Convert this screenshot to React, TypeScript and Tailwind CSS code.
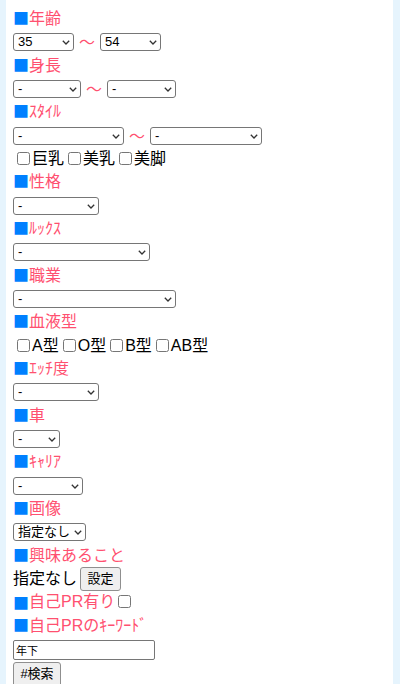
import React from "react";

const PINK = "text-[#ff5070]";

function H({ children }: { children: React.ReactNode }) {
  return (
    <div className={`h-[23.33px] leading-[20.5px] text-[16px] whitespace-nowrap ${PINK}`}>
      <span className="text-[#0080ff] font-['Noto_Sans_CJK_JP',sans-serif]">■</span>
      {children}
    </div>
  );
}

function Sel({ w, value = "-" }: { w: string; value?: string }) {
  return (
    <div className={`relative ${w} h-[18px] shrink-0`}>
      <select
        className="appearance-none block w-full h-[18px] border border-[#767676] rounded-[3px] bg-white text-[13px] leading-[16px] pl-[4px] text-black outline-none"
        defaultValue={value}
      >
        <option value={value}>{value}</option>
      </select>
      <svg
        className="absolute right-[4px] top-[7px] pointer-events-none"
        width="8"
        height="5"
        viewBox="0 0 8 5"
      >
        <path d="M0.8 0.8 L4 4 L7.2 0.8" stroke="#333" strokeWidth="1.3" fill="none" />
      </svg>
    </div>
  );
}

function SelRow({ children }: { children: React.ReactNode }) {
  return <div className="h-[23.33px] pt-[3px] flex items-start">{children}</div>;
}

function Tilde() {
  return (
    <span className={`w-[16px] mx-[5px] text-[16px] leading-[16px] font-['Noto_Sans_CJK_JP',sans-serif] ${PINK}`}>〜</span>
  );
}

function Chk({ label }: { label: string }) {
  return (
    <label className="flex items-center">
      <input type="checkbox" className="m-0 ml-[4px] mr-[2px] w-[13px] h-[13px]" />
      <span>{label}</span>
    </label>
  );
}

function ChkRow({ items }: { items: string[] }) {
  return (
    <div className="h-[23.33px] flex items-center text-[16px] text-black leading-[23.33px]">
      {items.map((i) => (
        <Chk key={i} label={i} />
      ))}
    </div>
  );
}

export default function App() {
  return (
    <div className="flex w-[400px] h-[684px] overflow-hidden bg-white font-['Liberation_Sans','Noto_Sans_CJK_JP',sans-serif]">
      <div className="w-[6px] shrink-0 bg-[#e6f4fd]" />
      <div className="flex-1 pl-[7px] pt-[7px] bg-white">
        <H>年齢</H>
        <SelRow>
          <Sel w="w-[61px]" value="35" />
          <Tilde />
          <Sel w="w-[61px]" value="54" />
        </SelRow>
        <H>身長</H>
        <SelRow>
          <Sel w="w-[68px]" />
          <Tilde />
          <Sel w="w-[69px]" />
        </SelRow>
        <H>ｽﾀｲﾙ</H>
        <SelRow>
          <Sel w="w-[111px]" />
          <Tilde />
          <Sel w="w-[112px]" />
        </SelRow>
        <ChkRow items={["巨乳", "美乳", "美脚"]} />
        <H>性格</H>
        <SelRow>
          <Sel w="w-[86px]" />
        </SelRow>
        <H>ﾙｯｸｽ</H>
        <SelRow>
          <Sel w="w-[137px]" />
        </SelRow>
        <H>職業</H>
        <SelRow>
          <Sel w="w-[163px]" />
        </SelRow>
        <H>血液型</H>
        <ChkRow items={["A型", "O型", "B型", "AB型"]} />
        <H>ｴｯﾁ度</H>
        <SelRow>
          <Sel w="w-[86px]" />
        </SelRow>
        <H>車</H>
        <SelRow>
          <Sel w="w-[47px]" />
        </SelRow>
        <H>ｷｬﾘｱ</H>
        <SelRow>
          <Sel w="w-[70px]" />
        </SelRow>
        <H>画像</H>
        <SelRow>
          <Sel w="w-[73px]" value="指定なし" />
        </SelRow>
        <H>興味あること</H>
        <div className="h-[23.33px] flex items-start text-[16px] text-black">
          <span className="w-[64px] shrink-0 whitespace-nowrap leading-[21px] pt-[1px] text-[16px]">指定なし</span>
          <button className="ml-[3px] w-[41px] h-[24px] text-[13px] leading-[16px] border border-[#8f8f8f] rounded-[3px] bg-[#efefef] text-black">
            設定
          </button>
        </div>
        <div className={`h-[23.33px] flex items-center leading-[20.5px] text-[16px] whitespace-nowrap ${PINK}`}>
          <span className="text-[#0080ff] font-['Noto_Sans_CJK_JP',sans-serif]">■</span>
          <span>自己PR有り</span>
          <input type="checkbox" className="m-0 ml-[3px] w-[13px] h-[13px]" />
        </div>
        <H>自己PRのｷｰﾜｰﾄﾞ</H>
        <div className="h-[23.33px] pt-[3px]">
          <input
            type="text"
            defaultValue="年下"
            className="block w-[142px] h-[20px] border border-[#767676] rounded-[2px] px-[2px] text-[11px] text-black bg-white outline-none"
          />
        </div>
        <div className="pt-[1px]">
          <button className="w-[48px] h-[25px] text-[13px] leading-[16px] border border-[#8f8f8f] rounded-[3px] bg-[#efefef] text-black">
            #検索
          </button>
        </div>
      </div>
      <div className="w-[7px] shrink-0 bg-[#e6f4fd]" />
    </div>
  );
}
